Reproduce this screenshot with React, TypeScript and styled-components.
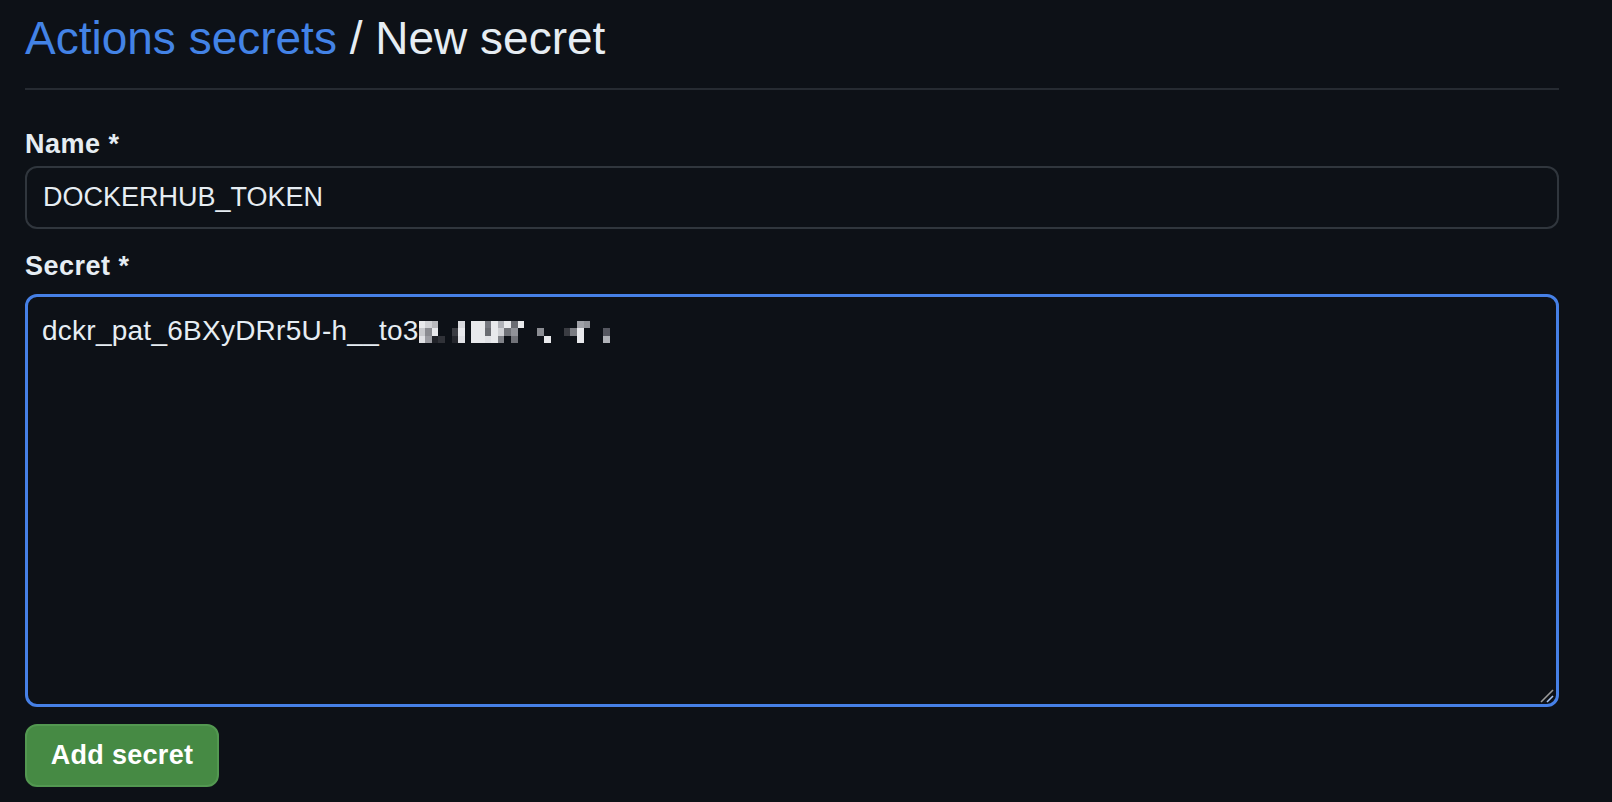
import * as React from 'react';
import styled, { createGlobalStyle } from 'styled-components';

const GlobalStyle = createGlobalStyle`
  body {
    margin: 0;
    background: #0d1117;
    color: #e6edf3;
    font-family: "Liberation Sans", Arial, sans-serif;
  }
`;

const Page = styled.div`
  padding: 11px 53px 16px 25px;
`;

const Subhead = styled.div`
  padding-bottom: 22px;
  border-bottom: 2px solid #262b32;
`;

const Heading = styled.h2`
  margin: 0;
  font-size: 46px;
  line-height: 55px;
  font-weight: 400;
  color: #e6edf3;
`;

const Crumb = styled.a`
  color: #4383e6;
  text-decoration: none;
`;

const Form = styled.form`
  display: flex;
  flex-direction: column;
  padding-top: 38px;
`;

const Field = styled.div`
  display: flex;
  flex-direction: column;
  margin-bottom: 21px;
`;

const Label = styled.label<{ $gap: number }>`
  font-size: 27px;
  line-height: 32px;
  font-weight: 700;
  letter-spacing: 0.5px;
  margin-bottom: ${({ $gap }) => $gap}px;
`;

const TextInput = styled.div`
  box-sizing: border-box;
  height: 63px;
  display: flex;
  align-items: center;
  padding: 0 16px;
  border: 2px solid #30363d;
  border-radius: 12px;
  font-size: 27px;
`;

const SecretBox = styled.div`
  position: relative;
  box-sizing: border-box;
  height: 413px;
  padding: 17px 14px;
  border: 3px solid #4680e6;
  border-radius: 12px;
  font-size: 28px;
  line-height: 1.2;
  letter-spacing: 0.25px;
  white-space: nowrap;
`;

const Mosaic = styled.span`
  display: inline-grid;
  grid-template-columns: repeat(29, 6.6px);
  grid-template-rows: repeat(3, 7.3px);
  vertical-align: top;
  margin-top: 7px;
`;

const Cell = styled.span<{ $c: string }>`
  background: ${({ $c }) => $c};
`;

const Grip = styled.svg`
  position: absolute;
  right: 2px;
  bottom: 1px;
`;

const SubmitButton = styled.button`
  align-self: flex-start;
  box-sizing: border-box;
  width: 194px;
  height: 63px;
  margin-top: -4px;
  background: #468a44;
  border: 2px solid #539851;
  border-radius: 12px;
  color: #ffffff;
  font-family: inherit;
  font-size: 27px;
  font-weight: 700;
  letter-spacing: 0.3px;
`;

const B = 'transparent';
const W = '#e8e9ec';
// pixelated part of the token, columns left to right, rows top to bottom
const columns: string[][] = [
  [W, '#c8c9cd', '#e0e1e5'],
  ['#d0d1d5', '#8a8b91', '#9a9ba1'],
  ['#b8b9bd', W, '#202228'],
  [B, B, '#303238'],
  [B, B, B],
  [B, '#3a3c42', '#25272d'],
  ['#d8d9dd', W, '#e0e1e5'],
  [B, B, B],
  [W, W, W],
  [W, W, W],
  ['#777980', '#6a6c72', '#e0e1e5'],
  [W, W, W],
  ['#b0b2b8', '#d0d1d5', '#808288'],
  [W, '#707278', B],
  ['#6a6c72', '#909298', '#707278'],
  [W, B, B],
  [B, B, B],
  [B, B, B],
  [B, '#8a8c92', B],
  [B, B, W],
  [B, B, B],
  [B, B, B],
  [B, '#3a3c42', B],
  [B, '#7a7c82', B],
  ['#a0a2a8', W, W],
  ['#909298', B, B],
  [B, B, B],
  [B, B, B],
  [B, '#555760', '#b0b2b8'],
];

const cells: string[] = [];
for (let r = 0; r < 3; r++) {
  columns.forEach((col) => cells.push(col[r]));
}

const App = () => (
  <Page>
    <GlobalStyle />
    <Subhead>
      <Heading>
        <Crumb href="#">Actions secrets</Crumb> / New secret
      </Heading>
    </Subhead>
    <Form onSubmit={(e) => e.preventDefault()}>
      <Field>
        <Label $gap={6}>Name *</Label>
        <TextInput>DOCKERHUB_TOKEN</TextInput>
      </Field>
      <Field>
        <Label $gap={12}>Secret *</Label>
        <SecretBox>
          dckr_pat_6BXyDRr5U-h__to3
          <Mosaic>
            {cells.map((c, i) => (
              <Cell key={i} $c={c} />
            ))}
          </Mosaic>
          <Grip width="14" height="14" viewBox="0 0 14 14">
            <path d="M1 13 L13 1" stroke="#9b9b9b" strokeWidth="1.6" />
            <path d="M7 13 L13 7" stroke="#a9c4ef" strokeWidth="1.6" />
          </Grip>
        </SecretBox>
      </Field>
      <SubmitButton type="submit">Add secret</SubmitButton>
    </Form>
  </Page>
);

export default App;
